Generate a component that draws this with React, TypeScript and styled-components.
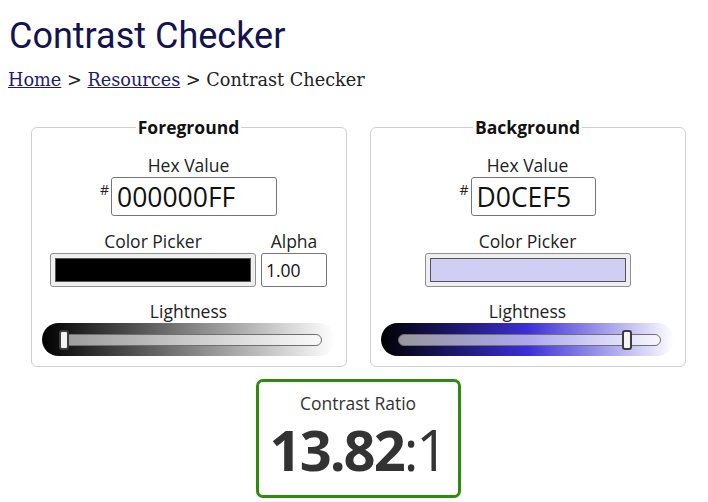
import { createGlobalStyle } from "styled-components";
import styled from "styled-components";

const GlobalStyle = createGlobalStyle`
  * {
    box-sizing: border-box;
  }

  body {
    margin: 0;
    padding: 0 0 0 8px;
    background: #fff;
    color: #222;
    font-family: "Open Sans", "Noto Sans", sans-serif;
  }
`;

type ColorPanel = {
  title: string;
  hex: string;
  hexWidth: number;
  swatch: string;
  alpha?: string;
  gradient: string;
  lightness: number;
};

const panels: ColorPanel[] = [
  {
    title: "Foreground",
    hex: "000000FF",
    hexWidth: 166,
    swatch: "#000000",
    alpha: "1.00",
    gradient: "linear-gradient(to right, #000 0%, #808080 50%, #fff 100%)",
    lightness: 0,
  },
  {
    title: "Background",
    hex: "D0CEF5",
    hexWidth: 125,
    swatch: "#d0cef5",
    gradient: "linear-gradient(to right, #000 0%, #3b2fd6 50%, #fff 100%)",
    lightness: 0.884,
  },
];

const TRACK_WIDTH = 263;
const THUMB_WIDTH = 10;

const Lightness = ({ gradient, value }: { gradient: string; value: number }) => (
  <SliderBar $gradient={gradient}>
    <Track>
      <Thumb style={{ left: value * (TRACK_WIDTH - THUMB_WIDTH) - 1 }} />
    </Track>
  </SliderBar>
);

const Panel = ({ panel }: { panel: ColorPanel }) => (
  <Fieldset>
    <Legend>{panel.title}</Legend>
    <Label>Hex Value</Label>
    <HexRow>
      <Hash>#</Hash>
      <HexInput $width={panel.hexWidth} value={panel.hex} readOnly />
    </HexRow>
    <PickerRow>
      <Field>
        <Label>Color Picker</Label>
        <ColorWell>
          <Swatch $color={panel.swatch} />
        </ColorWell>
      </Field>
      {panel.alpha && (
        <Field>
          <Label>Alpha</Label>
          <AlphaInput value={panel.alpha} readOnly />
        </Field>
      )}
    </PickerRow>
    <SliderLabel>Lightness</SliderLabel>
    <Lightness gradient={panel.gradient} value={panel.lightness} />
  </Fieldset>
);

export default function App() {
  return (
    <>
      <GlobalStyle />
      <Page>
        <Title>Contrast Checker</Title>
        <Crumbs>
          <CrumbLink href="#">Home</CrumbLink> &gt;{" "}
          <CrumbLink href="#">Resources</CrumbLink> &gt; Contrast Checker
        </Crumbs>
        <Panels>
          {panels.map((p) => (
            <Panel key={p.title} panel={p} />
          ))}
        </Panels>
        <Result>
          <ResultLabel>Contrast Ratio</ResultLabel>
          <Ratio>
            <strong>13.82</strong>:1
          </Ratio>
        </Result>
      </Page>
    </>
  );
}

const Page = styled.div`
  width: 700px;
  display: flex;
  flex-direction: column;
`;

const Title = styled.h1`
  margin: 15px 0 0;
  padding-left: 1px;
  font-family: Roboto, "Liberation Sans", sans-serif;
  font-weight: 400;
  font-size: 36px;
  line-height: 1.2;
  color: #13134f;
`;

const Crumbs = styled.div`
  margin-top: 10px;
  font-family: "DejaVu Serif", "Liberation Serif", serif;
  font-size: 17.7px;
  line-height: 24px;
  color: #222;
`;

const CrumbLink = styled.a`
  color: #1c1c70;
  text-decoration: underline;
`;

const Panels = styled.div`
  display: flex;
  justify-content: center;
  gap: 23px;
  margin-top: 23px;
`;

const Fieldset = styled.fieldset`
  width: 316px;
  margin: 0;
  padding: 14px 10px 10px;
  border: 1px solid #cfcfcf;
  border-radius: 6px;
  display: flex;
  flex-direction: column;
  align-items: center;
`;

const Legend = styled.legend`
  margin: 0 auto;
  padding: 0 2px;
  font-weight: 700;
  font-size: 17.5px;
  line-height: 24px;
  color: #111;
`;

const Label = styled.div`
  font-size: 17.5px;
  line-height: 24px;
  color: #222;
  text-align: center;
`;

const HexRow = styled.div`
  display: flex;
  align-items: flex-start;
  gap: 2px;
`;

const Hash = styled.span`
  margin-top: 5px;
  font-size: 14px;
  line-height: 16px;
  color: #222;
`;

const HexInput = styled.input<{ $width: number }>`
  width: ${(p) => p.$width}px;
  height: 39px;
  padding: 0 5px;
  border: 1px solid #767676;
  border-radius: 3px;
  font-family: "Open Sans", sans-serif;
  font-size: 26.5px;
  color: #111;
  background: #fff;
`;

const PickerRow = styled.div`
  display: flex;
  gap: 5px;
  margin-top: 13px;
`;

const Field = styled.div`
  display: flex;
  flex-direction: column;
  align-items: center;
`;

const ColorWell = styled.div`
  width: 206px;
  height: 34px;
  padding: 4px;
  border: 1px solid #8f8f8f;
  border-radius: 3px;
  background: #efefef;
`;

const Swatch = styled.div<{ $color: string }>`
  height: 100%;
  border: 1px solid #555;
  background: ${(p) => p.$color};
`;

const AlphaInput = styled.input`
  width: 66px;
  height: 34px;
  padding: 0 4px;
  border: 1px solid #767676;
  border-radius: 3px;
  font-family: "Open Sans", sans-serif;
  font-size: 17.5px;
  color: #111;
  background: #fff;
`;

const SliderLabel = styled(Label)`
  margin-top: 12px;
`;

const SliderBar = styled.div<{ $gradient: string }>`
  width: 293px;
  height: 33px;
  padding: 0 13px 0 17px;
  border-radius: 17px;
  background: ${(p) => p.$gradient};
  display: flex;
  align-items: center;
`;

const Track = styled.div`
  position: relative;
  width: ${TRACK_WIDTH}px;
  height: 12px;
  border: 1px solid #6f6f6f;
  border-radius: 6px;
  background: rgba(255, 255, 255, 0.58);
`;

const Thumb = styled.div`
  position: absolute;
  top: -5px;
  width: ${THUMB_WIDTH}px;
  height: 20px;
  border: 2px solid #3c3c3c;
  border-radius: 3px;
  background: #f4f4f4;
`;

const Result = styled.div`
  align-self: center;
  width: 205px;
  height: 119px;
  margin-top: 12px;
  padding-top: 9px;
  border: 3px solid #2f8a0e;
  border-radius: 7px;
  display: flex;
  flex-direction: column;
  align-items: center;
`;

const ResultLabel = styled.div`
  font-size: 17.5px;
  line-height: 24px;
  color: #333;
`;

const Ratio = styled.div`
  margin-top: 4px;
  font-size: 56px;
  line-height: 60px;
  letter-spacing: -2px;
  color: #333;

  strong {
    font-weight: 700;
  }
`;
